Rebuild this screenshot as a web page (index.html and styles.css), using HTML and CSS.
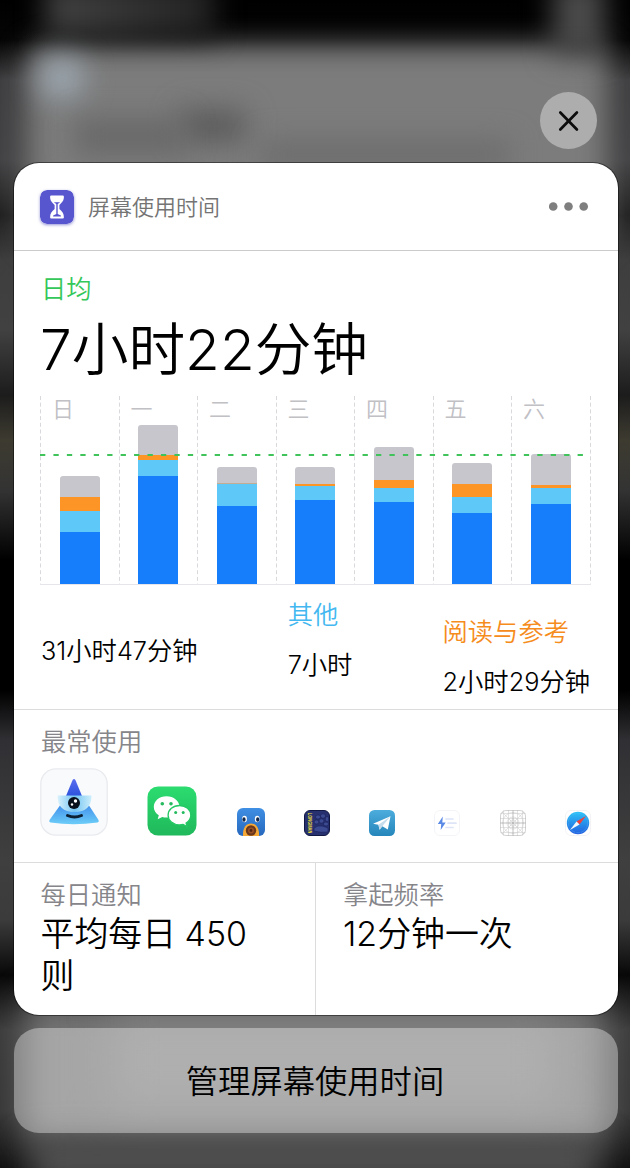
FILE: index.html
```html
<!DOCTYPE html>
<html lang="zh-CN">
<head>
<meta charset="utf-8">
<title>屏幕使用时间</title>
<link rel="stylesheet" href="styles.css">
</head>
<body>
<div class="backdrop">
  <i class="blob panel-a"></i><i class="blob top-left"></i><i class="blob top-right"></i>
  <i class="blob glow"></i><i class="blob shade-a"></i><i class="blob shade-b"></i><i class="blob shade-c"></i>
  <i class="blob panel-b"></i><i class="blob light-b"></i><i class="blob shade-d"></i>
</div>
<main class="screen">
  <button class="close" aria-label="关闭">
    <svg width="57" height="57" viewBox="0 0 57 57"><path d="M20.300 20.500l16.600 17M36.900 20.500l-16.600 17" stroke="#0c0c0c" stroke-width="2.700" stroke-linecap="round"/></svg>
  </button>
  <section class="card">
    <header class="head">
      <svg class="logo" width="34" height="34" viewBox="0 0 34 34"><rect width="34" height="34" rx="7" fill="#5856cf"/><path d="M11.300 5.500h11.400a1.200 1.200 0 0 1 1.200 1.300c0 4-1.800 5.500-4.500 8.200v4c2.700 2.500 4.500 4.300 4.500 8.200a1.200 1.200 0 0 1-1.200 1.300H11.300a1.200 1.200 0 0 1-1.200-1.300c0-3.900 1.800-5.700 4.500-8.200v-4c-2.700-2.700-4.500-4.200-4.500-8.200a1.200 1.200 0 0 1 1.200-1.300z" fill="#fff"/><path d="M13.800 12.300h6.400l-2.500 1.700v10l3.200 1.600v.8h-7.800v-.8l3.200-1.600V14z" fill="#5856cf"/></svg>
      <h1 class="title">屏幕使用时间</h1>
      <svg class="dots" width="40" height="10" viewBox="0 0 40 10" fill="#7f7f7f"><circle cx="4.200" cy="4.500" r="4.300"/><circle cx="19.500" cy="4.500" r="4.300"/><circle cx="34.700" cy="4.500" r="4.300"/></svg>
    </header>
    <section class="usage">
      <div class="label green">日均</div>
      <div class="total">7小时22分钟</div>
      <div class="chart">
        <svg class="grid" width="551" height="188" viewBox="0 0 551 188"><path d="M.5 0v188M79.500 0v188M157.500 0v188M236.500 0v188M314.500 0v188M393.500 0v188M471.500 0v188M550.500 0v188" stroke="#d9d9dd" stroke-dasharray="4 2.700"/></svg>
        <div class="day"><span>日</span><div class="bar"><i class="g" style="height:21px"></i><i class="o" style="height:14.500px"></i><i class="c" style="height:20.500px"></i><i class="b" style="height:52.500px"></i></div></div>
        <div class="day"><span>一</span><div class="bar"><i class="g" style="height:30px"></i><i class="o" style="height:4.700px"></i><i class="c" style="height:16.300px"></i><i class="b" style="height:108px"></i></div></div>
        <div class="day"><span>二</span><div class="bar"><i class="g" style="height:16.500px"></i><i class="o thin" style="height:1px"></i><i class="c" style="height:22px"></i><i class="b" style="height:78px"></i></div></div>
        <div class="day"><span>三</span><div class="bar"><i class="g" style="height:16.700px"></i><i class="o" style="height:2.300px"></i><i class="c" style="height:14px"></i><i class="b" style="height:84px"></i></div></div>
        <div class="day"><span>四</span><div class="bar"><i class="g" style="height:33.300px"></i><i class="o" style="height:7.700px"></i><i class="c" style="height:14.300px"></i><i class="b" style="height:82px"></i></div></div>
        <div class="day"><span>五</span><div class="bar"><i class="g" style="height:20.700px"></i><i class="o" style="height:13px"></i><i class="c" style="height:16px"></i><i class="b" style="height:71px"></i></div></div>
        <div class="day"><span>六</span><div class="bar"><i class="g" style="height:30.700px"></i><i class="o" style="height:3px"></i><i class="c" style="height:16.300px"></i><i class="b" style="height:80px"></i></div></div>
        <svg class="average" width="550" height="2" viewBox="0 0 550 2"><path d="M0 1h546" stroke="#3fc35a" stroke-width="2" stroke-dasharray="5.300 8.140"/></svg>
      </div>
      <div class="categories">
        <div class="cat first"><div class="value">31小时47分钟</div></div>
        <div class="cat second"><div class="label cyan">其他</div><div class="value">7小时</div></div>
        <div class="cat third"><div class="label orange">阅读与参考</div><div class="value">2小时29分钟</div></div>
      </div>
    </section>
    <section class="most">
      <div class="label">最常使用</div>
      <div class="apps">
        <svg width="68" height="68" viewBox="0 0 68 68">
          <defs><linearGradient id="cone" x2="0" y2="1"><stop offset="0" stop-color="#5b6df0"/><stop offset="1" stop-color="#2c52dc"/></linearGradient><linearGradient id="skirt" x2="0" y2="1"><stop offset="0" stop-color="#3f8ceb"/><stop offset="1" stop-color="#6ccdf8"/></linearGradient><linearGradient id="cup"><stop offset="0" stop-color="#d9f2fd"/><stop offset=".5" stop-color="#75c5f3"/><stop offset="1" stop-color="#cceefb"/></linearGradient></defs>
          <rect x=".8" y=".8" width="66.400" height="66.400" rx="15" fill="#f9fafc" stroke="#e8eaee" stroke-width="1.300"/>
          <path d="M21 36h27l10.500 16q1 2-1 2.600-24 3.400-47 0-2-.6-1-2.600z" fill="url(#skirt)"/>
          <path d="M32.600 12q1.400-2.200 2.800 0L42 28H26z" fill="url(#cone)"/>
          <path d="M17.500 27.500h34Q51.500 44 34.500 44t-17-16.500z" fill="url(#cup)"/>
          <circle cx="34" cy="35" r="6" fill="#07101c"/><circle cx="35.500" cy="33" r="1.700" fill="#fff"/><circle cx="32" cy="36.500" r="1.200" fill="#fff"/>
          <path d="M27.500 47.500q7 3.200 14 0" fill="none" stroke="#0c2034" stroke-width="3" stroke-linecap="round"/>
        </svg>
        <svg width="50" height="50" viewBox="0 0 50 50">
          <defs><linearGradient id="wx" x2="0" y2="1"><stop offset="0" stop-color="#2bdc70"/><stop offset="1" stop-color="#20b85b"/></linearGradient></defs>
          <rect x=".5" y=".5" width="49" height="49" rx="10.500" fill="url(#wx)"/>
          <path d="M19.500 10.300C12.300 10.300 6.800 15 6.800 21c0 3.500 2 6.400 5 8.300l-1.100 4 4.500-2.300c1.300.4 2.800.6 4.300.6 7.200 0 13-4.800 13-10.600s-5.800-10.700-13-10.700z" fill="#fff"/>
          <path d="M32.500 19.500c-6.500 0-11.400 4.300-11.400 9.700s4.900 9.700 11.400 9.700c1.300 0 2.500-.2 3.600-.5l4 2.100-1-3.500c2.900-1.900 4.700-4.600 4.700-7.800 0-5.400-4.900-9.700-11.300-9.700z" fill="#fff" stroke="#24c864" stroke-width="1.300"/>
          <g fill="#26ba5f"><circle cx="15.300" cy="17.700" r="1.800"/><circle cx="24" cy="17.700" r="1.800"/><circle cx="28.700" cy="26.500" r="1.500"/><circle cx="36.200" cy="26.500" r="1.500"/></g>
        </svg>
        <svg width="28" height="28" viewBox="0 0 28 28">
          <defs><linearGradient id="bird" x2="0" y2="1"><stop offset="0" stop-color="#3f8fe4"/><stop offset="1" stop-color="#2668bd"/></linearGradient></defs>
          <rect width="28" height="28" rx="6" fill="url(#bird)"/><ellipse cx="7.500" cy="11" rx="2.400" ry="3.200" fill="#fff"/><ellipse cx="20.200" cy="11" rx="2.400" ry="3.200" fill="#fff"/><ellipse cx="7" cy="11.500" rx="1.600" ry="2.300" fill="#13274c"/><ellipse cx="20.700" cy="11.500" rx="1.600" ry="2.300" fill="#13274c"/>
          <path d="M6 28c-.5-8 3-12.500 8-12.500S22.500 20 22 28z" fill="#f6a836"/><circle cx="14" cy="22.500" r="5.200" fill="#6b381b"/><circle cx="14" cy="22.500" r="3" fill="#9a5125"/><circle cx="14" cy="22.500" r="1.400" fill="#522611"/>
        </svg>
        <svg width="26" height="26" viewBox="0 0 26 26">
          <rect x=".5" y=".5" width="25" height="25" rx="5.500" fill="#27316f" stroke="#111842"/>
          <g fill="#3c4b91" stroke="#19205a" stroke-width=".6"><ellipse cx="14" cy="7" rx="2.500" ry="2"/><ellipse cx="19" cy="6" rx="2.500" ry="2.200"/><ellipse cx="23" cy="9" rx="1.800" ry="2.500"/><ellipse cx="12.500" cy="12" rx="2.500" ry="2"/><ellipse cx="17.500" cy="11" rx="2.500" ry="2.200"/><ellipse cx="22" cy="14" rx="2.500" ry="2"/><path d="M10 18q4-3 8-2t6 2v4q-7 1-14-1z"/></g>
          <text class="spine" transform="translate(4 2.700) rotate(90) scale(1 1.400)">LONGMAN</text>
        </svg>
        <svg width="26" height="26" viewBox="0 0 26 26">
          <defs><linearGradient id="tg" x2="0" y2="1"><stop offset="0" stop-color="#4cacdc"/><stop offset="1" stop-color="#2586bb"/></linearGradient></defs>
          <rect width="26" height="26" rx="5.500" fill="url(#tg)"/><path d="M4 13.700L21.500 6.300l-2.700 13.200-5.500-3.300-2.700 3.500-1.200-5z" fill="#fff"/><path d="M9.500 14.700l12-8.400-8.200 9.900-2.700 3.500z" fill="#c5dded"/>
        </svg>
        <svg width="26" height="26" viewBox="0 0 26 26"><rect x=".5" y=".5" width="25" height="25" rx="5.500" fill="#fff" stroke="#f3f4f7"/><path d="M8.800 6.500L3.800 14h3.400l-.5 6 5-7.500H8.300z" fill="#5b8ae6"/><path d="M12 9h7M14 13.200h8M12 17.500h7" stroke="#dee5f9" stroke-width="1.700" stroke-linecap="round"/></svg>
        <svg width="26" height="26" viewBox="0 0 26 26" fill="none" stroke="#cfcfcf" stroke-width=".6"><defs><clipPath id="tile"><rect width="26" height="26" rx="6"/></clipPath></defs><g clip-path="url(#tile)"><path d="M8.500 0v26M17.500 0v26M0 8.500h26M0 17.500h26M3.500 0v26M22.500 0v26M0 3.500h26M0 22.500h26M2 2l22 22M24 2L2 24"/><circle cx="13" cy="13" r="10.500"/><circle cx="13" cy="13" r="6"/><circle cx="13" cy="13" r="3.200"/><path d="M0 13h26M13 0v26" stroke="#999"/></g><rect x=".5" y=".5" width="25" height="25" rx="5.500" stroke="#b5b5b5"/></svg>
        <svg width="26" height="26" viewBox="0 0 26 26">
          <defs><linearGradient id="sf" x2="0" y2="1"><stop offset="0" stop-color="#2cc2f7"/><stop offset="1" stop-color="#2461df"/></linearGradient></defs>
          <rect x=".5" y=".5" width="25" height="25" rx="5.500" fill="#fff" stroke="#f3f3f5"/><circle cx="13" cy="13" r="11.200" fill="url(#sf)"/><circle cx="13" cy="13" r="9.700" fill="none" stroke="#6cc5f6" stroke-width=".8" stroke-dasharray=".4 .9"/><path d="M21 6L14.500 14.500l-3-3z" fill="#f0413b"/><path d="M5 20l6.500-8.500 3 3z" fill="#f4f8fd"/>
        </svg>
      </div>
    </section>
    <section class="stats">
      <div class="stat"><div class="label">每日通知</div><div class="figure">平均每日 450 则</div></div>
      <div class="stat"><div class="label">拿起频率</div><div class="figure">12分钟一次</div></div>
    </section>
  </section>
  <button class="manage">管理屏幕使用时间</button>
</main>
</body>
</html>
```
FILE: styles.css
```css
* { box-sizing: border-box; }
html, body { margin: 0; height: 1168px; overflow: hidden; }
body {
  position: relative;
  width: 630px;
  font-family: Inter, "Noto Sans CJK SC", sans-serif;
  font-weight: 350;
  background: #222;
}
button { border: 0; padding: 0; font: inherit; }
i { display: block; font-style: normal; }

/* Blurred home screen behind the card */
.backdrop {
  position: absolute;
  inset: 0;
  overflow: hidden;
  background: linear-gradient(#000 0, #050505 40px, #3e3e40 80px, #434345 160px, #202020 215px, #3e3e3e 260px, #414141 330px, #1c1c1c 395px, #3d3b30 440px, #333 490px, #000 560px, #000 690px, #303034 740px, #3f3f3f 860px, #3b3b3b 920px, #080808 975px, #3c3c3c 1030px, #383838 1110px, #111 1168px);
}
.blob { position: absolute; filter: blur(14px); }
.panel-a { left: 27px; top: 46px; width: 580px; height: 200px; background: #7c7c7c; border-radius: 16px; }
.top-left { left: 45px; top: -20px; width: 170px; height: 58px; background: linear-gradient(90deg, #424242, #222); }
.top-right { left: 553px; top: -20px; width: 52px; height: 76px; background: #4b4b4b; }
.glow { left: 41px; top: 58px; width: 42px; height: 40px; background: #9ca7b0; border-radius: 12px; }
.shade-a { left: 180px; top: 110px; width: 65px; height: 32px; background: #5b5b5b; }
.shade-b { left: 75px; top: 119px; width: 110px; height: 35px; background: #686868; }
.shade-c { left: 260px; top: 140px; width: 250px; height: 30px; background: #6d6d6d; }
.panel-b { left: 25px; top: 1000px; width: 581px; height: 143px; background: #727272; filter: blur(16px); }
.light-b { left: 110px; top: 1010px; width: 450px; height: 100px; background: #808080; filter: blur(22px); }
.shade-d { left: 30px; top: 1140px; width: 570px; height: 45px; background: #555; filter: blur(16px); }

.screen { position: relative; display: flex; flex-direction: column; padding: 92px 12.500px 0 13.500px; }
.close { align-self: flex-end; width: 57px; height: 57px; margin-right: 20.500px; border-radius: 50%; background: #adadad; }
.close svg { display: block; }

.card { margin-top: 14px; height: 852px; border-radius: 25px; background: #fff; overflow: hidden; box-shadow: 0 0 0 1px rgba(0,0,0,.45); }
.head { display: flex; align-items: center; height: 88px; padding: 0 28.500px 0 26.500px; border-bottom: 1px solid #cbcbcb; }
.logo { border-radius: 7px; box-shadow: 0 1px 3px rgba(60,58,180,.55); }
.title { margin: 0 auto 0 14px; font-size: 22px; line-height: 30px; font-weight: 350; color: #747474; }

.label { font-size: 25.300px; line-height: 34px; color: #85858a; }
.green { color: #34c759; }
.cyan { color: #43b8f0; }
.orange { color: #f58c1c; }

.usage { height: 459px; padding: 21px 26.500px 0; border-bottom: 1px solid #dcdcdf; }
.usage .label, .value { padding-left: 1px; }
.total { height: 90px; font-size: 56.700px; line-height: 87px; color: #000; white-space: nowrap; }
.chart {
  position: relative;
  display: grid;
  grid-template-columns: repeat(7, 78.500px);
  width: 551px;
  height: 189px;
  border-bottom: 1px solid #e5e5ea;
}
.grid { position: absolute; left: 0; top: 0; }
.day { position: relative; display: flex; flex-direction: column; justify-content: space-between; }
.day span { padding-left: 12px; font-size: 22px; line-height: 26px; color: #c0c0c5; }
.bar { width: 40px; margin-left: 19.800px; border-radius: 3px 3px 0 0; overflow: hidden; }
.g { background: #c7c6cd; }
.o { background: #fd9426; }
.thin { background: #c2ad92; }
.c { background: #5ec8f9; }
.b { background: #167efb; }
.average { position: absolute; left: 0; top: 57.500px; }

.categories { display: flex; justify-content: space-between; }
.value { margin-top: 16px; font-size: 25.300px; line-height: 34px; color: #000; white-space: nowrap; }
.first { padding-top: 33px; }
.second { padding-top: 13px; }
.third { padding: 30px 1px 0 0; }

.most { height: 153px; padding: 15px 26.500px 0; border-bottom: 1px solid #dcdcdf; }
.most .label { padding-left: 1px; }
.apps { display: flex; align-items: flex-end; justify-content: space-between; margin-top: 9px; }
.apps svg { display: block; flex: none; }
.spine { font: 700 4px "Liberation Sans", sans-serif; fill: #f5e236; }

.stats { display: grid; grid-template-columns: 302.500px 1fr; height: 152px; }
.stat { padding: 15px 50px 0 27px; }
.stat:first-child { border-right: 1px solid #dcdcdf; }
.figure { padding-top: 1px; font-size: 33.900px; line-height: 42px; word-spacing: -1px; color: #000; }

.manage { height: 105px; margin-top: 13px; padding: 0 1px 3px 0; border-radius: 25px; background: rgba(255,255,255,.37); font-size: 32.300px; color: #000; }
```
